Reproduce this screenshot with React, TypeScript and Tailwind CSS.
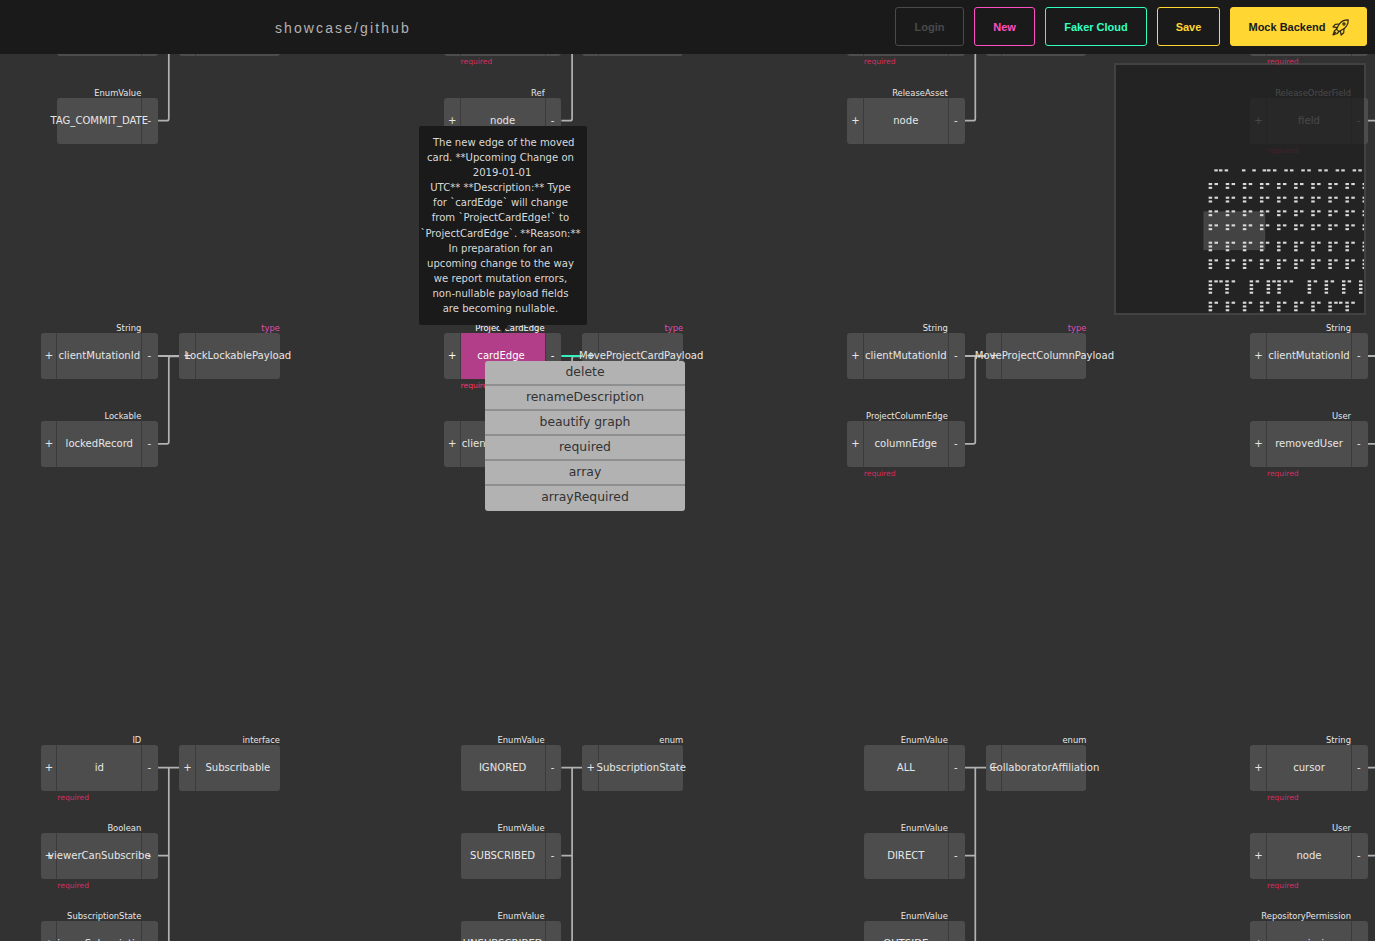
import type { ReactNode } from 'react';

const COLS = [57.3, 460.6, 863.8, 1267];
const HEADER = 54;

type Field = {
  col: number;
  y: number;
  name: string;
  kind: string;
  input?: boolean;
  output?: boolean;
  required?: boolean;
  selected?: boolean;
  type?: boolean;
  pink?: boolean;
};

const fields: Field[] = [
  { col: 0, y: 9.4, name: '', kind: '', output: true },
  { col: 1, y: 9.4, name: '', kind: '', input: true, output: true, required: true },
  { col: 2, y: 9.4, name: '', kind: '', input: true, output: true, required: true },
  { col: 3, y: 9.4, name: '', kind: '', input: true, output: true, required: true },
  { col: 0, y: 9.4, name: '', kind: '', input: true, type: true },
  { col: 1, y: 9.4, name: '', kind: '', input: true, type: true },
  { col: 2, y: 9.4, name: '', kind: '', input: true, type: true },

  { col: 0, y: 97.6, name: 'TAG_COMMIT_DATE', kind: 'EnumValue', output: true },
  { col: 1, y: 97.6, name: 'node', kind: 'Ref', input: true, output: true },
  { col: 2, y: 97.6, name: 'node', kind: 'ReleaseAsset', input: true, output: true },
  { col: 3, y: 97.6, name: 'field', kind: 'ReleaseOrderField', input: true, output: true, required: true },

  { col: 0, y: 333, name: 'clientMutationId', kind: 'String', input: true, output: true },
  { col: 1, y: 333, name: 'cardEdge', kind: 'ProjectCardEdge', input: true, output: true, required: true, selected: true },
  { col: 2, y: 333, name: 'clientMutationId', kind: 'String', input: true, output: true },
  { col: 3, y: 333, name: 'clientMutationId', kind: 'String', input: true, output: true },
  { col: 0, y: 333.2, name: 'LockLockablePayload', kind: 'type', input: true, type: true, pink: true },
  { col: 1, y: 333.2, name: 'MoveProjectCardPayload', kind: 'type', input: true, type: true, pink: true },
  { col: 2, y: 333.2, name: 'MoveProjectColumnPayload', kind: 'type', input: true, type: true, pink: true },

  { col: 0, y: 421.2, name: 'lockedRecord', kind: 'Lockable', input: true, output: true },
  { col: 1, y: 421.2, name: 'clientMutationId', kind: 'String', input: true, output: true },
  { col: 2, y: 421.2, name: 'columnEdge', kind: 'ProjectColumnEdge', input: true, output: true, required: true },
  { col: 3, y: 421.2, name: 'removedUser', kind: 'User', input: true, output: true, required: true },

  { col: 0, y: 744.7, name: 'id', kind: 'ID', input: true, output: true, required: true },
  { col: 1, y: 744.7, name: 'IGNORED', kind: 'EnumValue', output: true },
  { col: 2, y: 744.7, name: 'ALL', kind: 'EnumValue', output: true },
  { col: 3, y: 744.7, name: 'cursor', kind: 'String', input: true, output: true, required: true },
  { col: 0, y: 745, name: 'Subscribable', kind: 'interface', input: true, type: true },
  { col: 1, y: 745, name: 'SubscriptionState', kind: 'enum', input: true, type: true },
  { col: 2, y: 745, name: 'CollaboratorAffiliation', kind: 'enum', input: true, type: true },

  { col: 0, y: 832.8, name: 'viewerCanSubscribe', kind: 'Boolean', input: true, output: true, required: true },
  { col: 1, y: 832.8, name: 'SUBSCRIBED', kind: 'EnumValue', output: true },
  { col: 2, y: 832.8, name: 'DIRECT', kind: 'EnumValue', output: true },
  { col: 3, y: 832.8, name: 'node', kind: 'User', input: true, output: true, required: true },

  { col: 0, y: 921, name: 'viewerSubscription', kind: 'SubscriptionState', input: true, output: true },
  { col: 1, y: 921, name: 'UNSUBSCRIBED', kind: 'EnumValue', output: true },
  { col: 2, y: 921, name: 'OUTSIDE', kind: 'EnumValue', output: true },
  { col: 3, y: 921, name: 'permission', kind: 'RepositoryPermission', input: true, output: true },
];

function Centered({ children }: { children: ReactNode }) {
  return <span className="shrink-0 whitespace-pre">{children}</span>;
}

function Node({ f }: { f: Field }) {
  const left = COLS[f.col] + (f.type ? 138.6 : 0) - (f.input ? 16.8 : 0);
  return (
    <div
      className={`absolute flex h-[46.2px] text-[10.08px] leading-none ${f.selected ? 'text-white' : 'text-[#e6e6e6]'}`}
      style={{ left, top: f.y - HEADER }}
    >
      {f.input && (
        <div className="flex w-[16.8px] items-center justify-center rounded-l-[3px] border-r border-[#3b3b3b] bg-[#4d4d4d] pl-px">
          {f.name && <Centered>+</Centered>}
        </div>
      )}
      <div
        className={`relative flex w-[84px] items-center justify-center ${f.selected ? 'bg-[#b23d88] pr-[3px]' : 'bg-[#4d4d4d]'} ${f.input ? '' : 'rounded-l-[3px]'} ${f.output ? '' : 'rounded-r-[3px]'}`}
      >
        <Centered>{f.name}</Centered>
        <span
          className={`absolute -top-[9px] right-0 whitespace-nowrap text-[8.4px] ${f.pink ? 'text-[#de4fb0]' : ''}`}
        >
          {f.kind}
        </span>
        {f.required && (
          <span
            className={`absolute left-0 top-[49px] text-[7.56px] ${f.selected ? 'text-[#ff3369]' : 'text-[#d82e60]'}`}
          >
            required
          </span>
        )}
      </div>
      {f.output && (
        <div className="flex w-[16.8px] items-center justify-center rounded-r-[3px] border-l border-[#3b3b3b] bg-[#4d4d4d] pr-[2px]">
          {f.name && <Centered>-</Centered>}
        </div>
      )}
    </div>
  );
}

function Links() {
  return (
    <svg className="absolute left-0 top-0" width="1375" height="887" viewBox="0 54 1375 887" fill="none" stroke="#b2b2b2" strokeWidth="1.7">
      {[0, 1, 2, 3].map((c) => {
        const x = COLS[c] + 100.8;
        const v = x + 10.7;
        return (
          <g key={c}>
            <path d={`M${x} 120.7H${v - 2}Q${v} 120.7 ${v} 118.7V50`} />
            <path d={`M${x} 443.9H${v - 2}Q${v} 443.9 ${v} 442V358Q${v} 356.3 ${v + 2} 356.3H${x + 21.5}`} />
            <path d={`M${x} 356H${x + 21.5}`} stroke={c === 1 ? '#33f0bd' : '#b2b2b2'} strokeWidth="2" />
            <path d={`M${x} 767.7H${x + 21.5}M${v} 767.7V941M${x} 855.7H${v}`} />
          </g>
        );
      })}
    </svg>
  );
}

const tooltip = [
  ' The new edge of the moved ',
  'card. **Upcoming Change on  ',
  '2019-01-01 ',
  'UTC** **Description:** Type  ',
  'for `cardEdge` will change  ',
  'from `ProjectCardEdge!` to  ',
  '`ProjectCardEdge`. **Reason:**  ',
  'In preparation for an  ',
  'upcoming change to the way  ',
  'we report mutation errors,  ',
  'non-nullable payload fields  ',
  'are becoming nullable.  ',
];

function Tooltip() {
  return (
    <div className="absolute left-[418.7px] top-[72.4px] flex w-[168px] flex-col items-center rounded-[2px] bg-[#1a1a1a] py-[8.4px] pl-[2px] text-[10.08px] leading-[15.12px] text-[#d9d9d9]">
      {tooltip.map((line) => (
        <Centered key={line}>{line}</Centered>
      ))}
      <svg className="absolute -bottom-2 left-[79px]" width="10" height="8" fill="#1a1a1a">
        <path d="M0 0H10L5 8Z" />
      </svg>
    </div>
  );
}

const actions = ['delete', 'renameDescription', 'beautify graph', 'required', 'array', 'arrayRequired'];

function ContextMenu() {
  return (
    <ul className="absolute left-[485px] top-[307px] w-[200px] overflow-hidden rounded-[3px] bg-[#b2b2b2] text-center text-[12.4px] leading-[22px] text-[#333]">
      {actions.map((a) => (
        <li key={a} className="h-[25px] border-b-2 border-[#8f8f8f] last:border-b-0">
          {a}
        </li>
      ))}
    </ul>
  );
}

const base = [301, 352.3, 403.6, 454.9, 506.2, 557.5, 608.8, 660.1, 711.4, 762.7];
const pairs = base.flatMap((x) => [x, x + 17.6]);
const mapRows: { y: number; heads: number[]; stems: number[]; n: number }[] = [
  { y: 346, heads: [318, 332, 349, 401, 432, 463, 476, 494, 528, 545, 579, 597, 630, 648, 682, 699, 733, 750], stems: [], n: 0 },
  { y: 387, heads: pairs, stems: base, n: 1 },
  { y: 428, heads: pairs, stems: base, n: 1 },
  { y: 469, heads: pairs, stems: base, n: 1 },
  { y: 511, heads: pairs, stems: base, n: 1 },
  { y: 563, heads: pairs, stems: base, n: 2 },
  { y: 616, heads: pairs, stems: base, n: 2 },
  {
    y: 679,
    heads: [301, 318, 333, 351, 370, 424, 442, 475, 492, 507, 526, 544, 598, 616, 649, 667, 701, 718, 752],
    stems: [301, 351, 424, 475, 507, 598, 649, 701, 752],
    n: 3,
  },
  {
    y: 743,
    heads: [...pairs.slice(0, 16), 692, 711, 729],
    stems: base.slice(0, 9),
    n: 3,
  },
];

function MiniMap() {
  return (
    <div className="absolute left-[1114px] top-[9px] h-[252px] w-[252px] overflow-hidden border-2 border-[#4d4d4d]/60 bg-[#1f1f1f]/80 bg-clip-padding">
      <svg width="248" height="248" viewBox="1116 65 248 248" className="block overflow-visible">
        <rect x="1203.8" y="211.7" width="61" height="38" fill="#fff" fillOpacity=".15" stroke="#fff" strokeOpacity=".08" />
        {mapRows.flatMap((r) => [
          ...r.heads.map((x) => ({ x, y: r.y })),
          ...Array.from({ length: r.n }, (_, i) => r.stems.map((x) => ({ x, y: r.y + 11.3 * (i + 1) }))).flat(),
        ]).map((p, i) => (
          <rect key={i} x={1110 + p.x / 3 - 1.7} y={55 + p.y / 3 - 1} width="3.5" height="2.1" fill="#d9d9d9" />
        ))}
      </svg>
    </div>
  );
}

function Rocket() {
  return (
    <svg width="17" height="17" viewBox="0 0 17 17" fill="none" stroke="#2b2817" strokeWidth="1.2" strokeLinejoin="round" strokeLinecap="round">
      <path d="M16.2.8C12 .7 9.3 2.3 7.3 5L4.4 10.1 6.9 12.6 12 9.7C14.7 7.7 16.3 5 16.2.8Z" />
      <path d="M7.3 5 3.3 5.3 1 7.8 5.2 8.7M12 9.7 11.7 13.7 9.2 16 8.3 11.8" />
      <path d="M4.4 10.1 2.5 11.7 1 16 5.3 14.5 6.9 12.6M1.3 15.7 3.8 13.2" />
      <circle cx="12" cy="5" r="1.1" />
    </svg>
  );
}

function Button({ className, children }: { className: string; children: ReactNode }) {
  return (
    <button className={`flex h-[39px] items-center justify-center rounded-[3px] border pt-px text-[11px] font-bold ${className}`}>
      {children}
    </button>
  );
}

export default function App() {
  return (
    <div className="flex h-[941px] w-full flex-col overflow-hidden bg-[#323232] font-['DejaVu_Sans',sans-serif]">
      <header className="flex h-[54px] shrink-0 items-center justify-between bg-[#1a1a1a] pb-px pl-[275px] pr-2 font-['Liberation_Sans',sans-serif]">
        <h1 className="pt-[3px] text-[14px] tracking-[2.1px] text-[#b2b2b2]">showcase/github</h1>
        <nav className="flex gap-[10px]">
          <Button className="w-[69px] border-[#4a4a4a] text-[#4a4a4a]">Login</Button>
          <Button className="w-[61px] border-[#ff4fc1] text-[#ff4fc1]">New</Button>
          <Button className="w-[102px] border-[#33ffc2] text-[#33ffc2]">Faker Cloud</Button>
          <Button className="w-[63px] border-[#ffd632] text-[#ffd632]">Save</Button>
          <Button className="w-[137px] gap-[6px] border-[#ffd632] bg-[#ffd632] text-[#1a1a1a]">
            Mock Backend
            <Rocket />
          </Button>
        </nav>
      </header>
      <main className="relative flex-1 overflow-hidden">
        <Links />
        {fields.map((f, i) => (
          <Node key={i} f={f} />
        ))}
        <Tooltip />
        <ContextMenu />
        <MiniMap />
      </main>
    </div>
  );
}
